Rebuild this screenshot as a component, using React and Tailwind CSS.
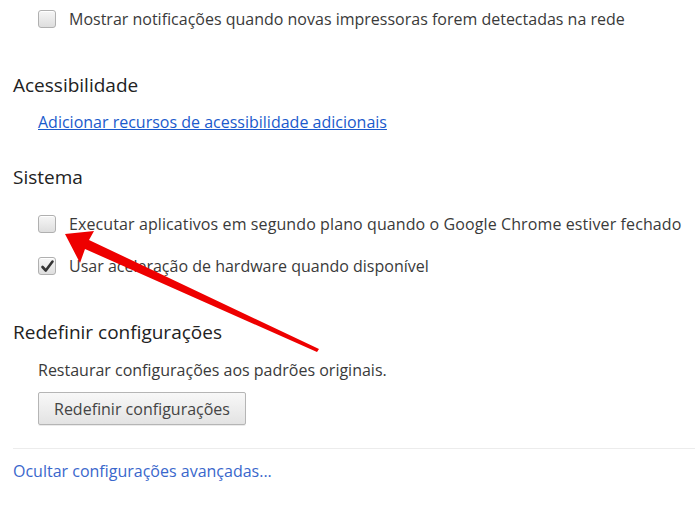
export default function App() {
  return (
    <div className="relative w-[695px] h-[520px] overflow-hidden bg-white text-[#3a3a3a] font-['Open_Sans',sans-serif]">
      <div className="pl-[13px]">
        {/* Printers */}
        <div className="pl-[25px] pt-[7px] flex items-center gap-[13px] h-[24px] box-content">
          <Checkbox />
          <span className="text-[16px] leading-[24px]">Mostrar notificações quando novas impressoras forem detectadas na rede</span>
        </div>

        {/* Accessibility */}
        <h3 className="mt-[41px] text-[19px] leading-[26px] text-[#222]">Acessibilidade</h3>
        <div className="pl-[25px] mt-[12px]">
          <a href="#" className="text-[16px] leading-[24px] text-[#1a5acc] underline">Adicionar recursos de acessibilidade adicionais</a>
        </div>

        {/* System */}
        <h3 className="mt-[30px] text-[19px] leading-[26px] text-[#222]">Sistema</h3>
        <div className="pl-[25px] mt-[22px] flex flex-col gap-[18px]">
          <div className="flex items-center gap-[13px] h-[24px]">
            <Checkbox />
            <span className="text-[16px] leading-[24px] tracking-[0.1px]">Executar aplicativos em segundo plano quando o Google Chrome estiver fechado</span>
          </div>
          <div className="flex items-center gap-[13px] h-[24px]">
            <Checkbox checked />
            <span className="text-[16px] leading-[24px]">Usar aceleração de hardware quando disponível</span>
          </div>
        </div>

        {/* Reset */}
        <h3 className="mt-[41px] text-[19px] leading-[26px] text-[#222]">Redefinir configurações</h3>
        <div className="pl-[25px] mt-[13px]">
          <p className="text-[16px] leading-[24px]">Restaurar configurações aos padrões originais.</p>
          <button className="mt-[10px] h-[33px] px-[15px] border border-[#b5b5b5] rounded-[2px] bg-gradient-to-b from-[#f8f8f8] to-[#e3e3e3] text-[16px] text-[#444] shadow-[0_1px_0_rgba(0,0,0,0.08)]">
            Redefinir configurações
          </button>
        </div>

        <div className="mt-[23px] border-t border-[#ececec]" />
        <a href="#" className="block mt-[10px] text-[16px] leading-[24px] text-[#3a67cc]">Ocultar configurações avançadas...</a>
      </div>

      {/* Red annotation arrow */}
      <svg className="absolute left-0 top-0 pointer-events-none" width="695" height="520" viewBox="0 0 695 520">
        <polygon points="65,234 94,231 89,240 319,349 317,352 85,249 80,263" fill="#ee0000" />
      </svg>
    </div>
  );
}

function Checkbox({ checked = false }) {
  return (
    <span className="relative w-[18px] h-[18px] shrink-0 rounded-[3px] border border-[#b0b0b0] bg-gradient-to-b from-[#f6f6f6] to-[#dedede] shadow-[inset_0_1px_0_#fff]">
      {checked && (
        <svg className="absolute left-[1px] top-[1px]" width="15" height="15" viewBox="0 0 15 15">
          <path d="M2.5 8 L5.8 11.5 L12.5 2.5" fill="none" stroke="#333" strokeWidth="2.6" strokeLinecap="round" strokeLinejoin="round" />
        </svg>
      )}
    </span>
  );
}
